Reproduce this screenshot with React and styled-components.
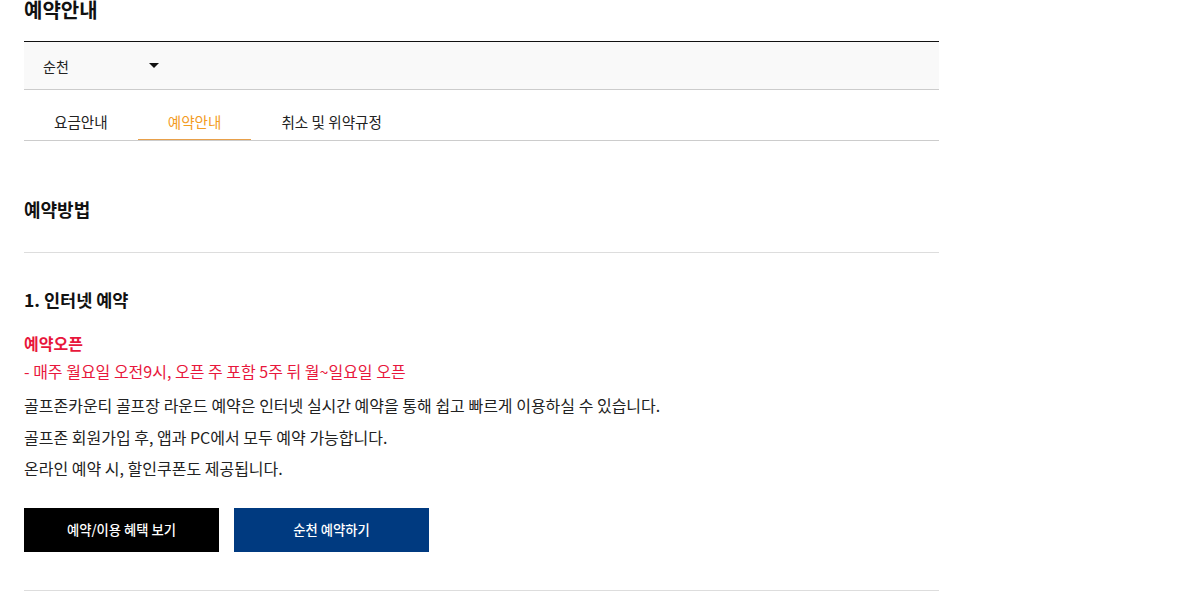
import React, { useState } from 'react'
import styled, { createGlobalStyle } from 'styled-components'

const Global = createGlobalStyle`
  body {
    margin: 0;
    background: #fff;
    font-family: "Noto Sans CJK KR", "Noto Sans", sans-serif;
    color: #111;
  }
`

const tabs = ['요금안내', '예약안내', '취소 및 위약규정']

const App = () => {
  const [active, setActive] = useState(1)
  return (
    <>
      <Global />
      <Page>
        <Title>예약안내</Title>
        <SelectBar>
          <SelectBox>
            순천
            <Caret />
          </SelectBox>
        </SelectBar>
        <TabList>
          {tabs.map((t, i) => (
            <Tab key={t} $on={i === active} onClick={() => setActive(i)}>
              {t}
            </Tab>
          ))}
        </TabList>
        <SectionHead>예약방법</SectionHead>
        <Block>
          <SubHead>1. 인터넷 예약</SubHead>
          <RedTitle>예약오픈</RedTitle>
          <RedLine>- 매주 월요일 오전9시, 오픈 주 포함 5주 뒤 월~일요일 오픈</RedLine>
          <Para>골프존카운티 골프장 라운드 예약은 인터넷 실시간 예약을 통해 쉽고 빠르게 이용하실 수 있습니다.</Para>
          <Para>골프존 회원가입 후, 앱과 PC에서 모두 예약 가능합니다.</Para>
          <Para>온라인 예약 시, 할인쿠폰도 제공됩니다.</Para>
          <Buttons>
            <Btn $bg="#000">예약/이용 혜택 보기</Btn>
            <Btn $bg="#003a80">순천 예약하기</Btn>
          </Buttons>
        </Block>
      </Page>
    </>
  )
}

export default App

const Page = styled.div`
  width: 915px;
  margin-left: 24px;
`
const Title = styled.h2`
  margin: -5px 0 0;
  height: 46px;
  font-size: 20px;
  font-weight: 700;
  line-height: 30px;
  color: #111;
`
const SelectBar = styled.div`
  border-top: 1px solid #111;
  border-bottom: 1px solid #ccc;
  background: #f9f9f9;
  height: 47px;
  display: flex;
  align-items: center;
`
const SelectBox = styled.div`
  display: flex;
  align-items: center;
  justify-content: space-between;
  width: 116px;
  padding-left: 19px;
  font-size: 14px;
  color: #222;
`
const Caret = styled.span`
  width: 0;
  height: 0;
  border-left: 5px solid transparent;
  border-right: 5px solid transparent;
  border-top: 5px solid #111;
`
const TabList = styled.div`
  display: flex;
  border-bottom: 1px solid #ccc;
  margin-top: 11px;
`
const Tab = styled.div`
  padding: 10px 30px 0;
  height: 39px;
  box-sizing: border-box;
  font-size: 14.6px;
  line-height: 22px;
  text-align: center;
  cursor: pointer;
  color: ${p => (p.$on ? '#f39c1f' : '#222')};
  border-bottom: 1px solid ${p => (p.$on ? '#e8a04a' : 'transparent')};
`
const SectionHead = styled.h3`
  margin: 0;
  padding: 55px 0 30px;
  font-size: 18px;
  font-weight: 700;
  line-height: 26px;
  border-bottom: 1px solid #ddd;
`
const Block = styled.div`
  padding: 34px 0 38px;
  border-bottom: 1px solid #ddd;
`
const SubHead = styled.h4`
  margin: 0 0 16px;
  font-size: 17.5px;
  font-weight: 700;
  line-height: 26px;
`
const RedTitle = styled.p`
  margin: 0;
  font-size: 16px;
  font-weight: 700;
  line-height: 28px;
  color: #e8173c;
`
const RedLine = styled.p`
  margin: 0 0 5px;
  font-size: 16px;
  line-height: 28px;
  color: #e8173c;
`
const Para = styled.p`
  margin: 0;
  font-size: 16px;
  line-height: 31.5px;
  color: #222;
`
const Buttons = styled.div`
  display: flex;
  gap: 15px;
  margin-top: 23px;
`
const Btn = styled.button`
  width: 195px;
  height: 44px;
  border: 0;
  background: ${p => p.$bg};
  color: #fff;
  font-family: inherit;
  font-size: 13.3px;
  font-weight: 500;
  cursor: pointer;
`
